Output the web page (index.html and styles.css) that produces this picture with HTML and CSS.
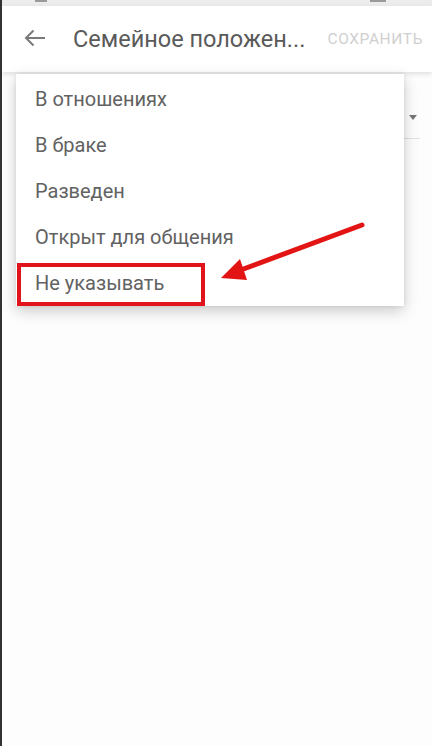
FILE: index.html
```html
<!DOCTYPE html>
<html>
<head>
<meta name="viewport" content="width=device-width" />
<link rel="stylesheet" href="styles.css">
</head>
<body>
<div class="screen">
  <div class="statusbar"><span class="sb-a"></span><span class="sb-b"></span></div>
  <div class="appbar">
    <svg class="back" width="22" height="18" viewBox="0 0 22 18"><path d="M21 9H2M9.5 1.5L2 9l7.5 7.5" fill="none" stroke="#7a7a7a" stroke-width="2"/></svg>
    <div class="title">Семейное положен...</div>
    <div class="save">СОХРАНИТЬ</div>
  </div>
  <div class="content">
    <div class="field"><span class="caret"></span></div>
  </div>

  <ul class="menu">
    <li>В отношениях</li>
    <li>В браке</li>
    <li>Разведен</li>
    <li>Открыт для общения</li>
    <li>Не указывать</li>
  </ul>
  <div class="mark"></div>
  <svg class="arrow" width="432" height="746" viewBox="0 0 432 746">
    <line x1="362" y1="225" x2="238" y2="271" stroke="#e31414" stroke-width="5" stroke-linecap="round"/>
    <polygon points="221,278 240,259 247,280" fill="#e31414"/>
  </svg>
</div>
</body>
</html>
```
FILE: styles.css
```css
* {box-sizing: border-box;}
html, body {margin: 0; padding: 0; height: 100%;}
body {font-family: Roboto, "Noto Sans", sans-serif; background: #fdfdfd;}

.screen {position: relative; height: 746px; border-left: 2px solid #333; background: #fdfdfd; overflow: hidden;}

.statusbar {height: 6px; background: #ececec; position: relative;}
.sb-a, .sb-b {position: absolute; top: 0; height: 2px; background: #9a9a9a;}
.sb-a {left: 33px; width: 12px;}
.sb-b {left: 368px; width: 16px;}

.appbar {height: 66px; background: #fff; display: flex; align-items: center; padding: 0 0 0 22px;
  box-shadow: 0 2px 5px rgba(0,0,0,0.12); position: relative; z-index: 1;}
.back {flex: none; margin-top: -2px;}
.title {margin-left: 27px; font-size: 23.5px; color: #5a5a5a; white-space: nowrap;}
.save {margin-left: auto; margin-right: 9px; font-size: 15.5px; color: #d0d0d0; letter-spacing: 0.6px;}

.content {padding: 0 12px 0 16px;}
.field {height: 67px; border-bottom: 1px solid #e2e2e2; display: flex; justify-content: flex-end; align-items: flex-end; padding-bottom: 18px;}
.caret {width: 0; height: 0; border-left: 4px solid transparent; border-right: 4px solid transparent; border-top: 5px solid #777; margin-right: 3px;}

.menu {position: absolute; left: 14px; top: 74px; width: 388px; margin: 0; padding: 2px 0 0; list-style: none; background: #fff;
  box-shadow: 0 5px 14px rgba(0,0,0,0.2), 0 0 4px rgba(0,0,0,0.08); z-index: 2;}
.menu li {height: 46px; line-height: 46px; padding-left: 19px; font-size: 20px; color: #626262;}

.mark {position: absolute; left: 15px; top: 263px; width: 188px; height: 43px; border: 4px solid #e0141a; z-index: 3;}
.arrow {position: absolute; left: -2px; top: 0; z-index: 3;}
```
